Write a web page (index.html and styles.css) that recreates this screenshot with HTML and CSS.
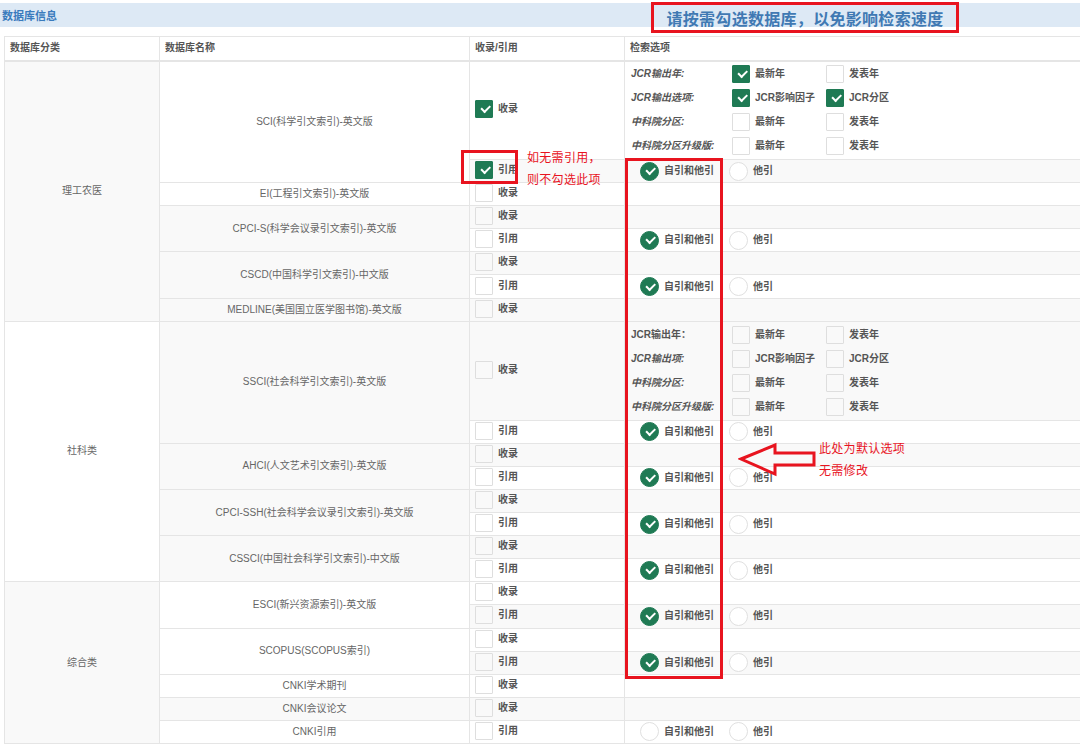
FILE: index.html
```html
<!DOCTYPE html>
<html lang="zh-CN">
<head>
<meta charset="utf-8">
<title>数据库信息</title>
<link rel="stylesheet" href="styles.css">
</head>
<body>
<div class="bar"><span class="bar-title">数据库信息</span></div>
<table class="db">
  <colgroup><col class="c1"><col class="c2"><col class="c3"><col class="c4"></colgroup>
  <thead>
    <tr><th>数据库分类</th><th>数据库名称</th><th>收录/引用</th><th>检索选项</th></tr>
  </thead>
  <tbody>
    <tr class="tall">
      <td rowspan="8" class="cat g">理工农医</td>
      <td rowspan="2" class="name">SCI(科学引文索引)-英文版</td>
      <td class="rec"><span class="ck"><span class="box on"></span>收录</span></td>
      <td class="opt">
        <div class="jcr">
          <div class="jl"><span class="jk">JCR输出年:</span><span class="jo"><span class="box on"></span>最新年</span><span class="jo"><span class="box"></span>发表年</span></div>
          <div class="jl"><span class="jk">JCR输出选项:</span><span class="jo"><span class="box on"></span>JCR影响因子</span><span class="jo"><span class="box on"></span>JCR分区</span></div>
          <div class="jl"><span class="jk">中科院分区:</span><span class="jo"><span class="box"></span>最新年</span><span class="jo"><span class="box"></span>发表年</span></div>
          <div class="jl"><span class="jk">中科院分区升级版:</span><span class="jo"><span class="box"></span>最新年</span><span class="jo"><span class="box"></span>发表年</span></div>
        </div>
      </td>
    </tr>
    <tr class="s">
      <td class="rec"><span class="ck"><span class="box on"></span>引用</span></td>
      <td class="opt"><div class="radios"><span class="rd"><span class="rad on"></span>自引和他引</span><span class="rd"><span class="rad"></span>他引</span></div></td>
    </tr>
    <tr>
      <td class="name">EI(工程引文索引)-英文版</td>
      <td class="rec"><span class="ck"><span class="box"></span>收录</span></td>
      <td class="opt"></td>
    </tr>
    <tr class="s">
      <td rowspan="2" class="name">CPCI-S(科学会议录引文索引)-英文版</td>
      <td class="rec"><span class="ck"><span class="box"></span>收录</span></td>
      <td class="opt"></td>
    </tr>
    <tr>
      <td class="rec"><span class="ck"><span class="box"></span>引用</span></td>
      <td class="opt"><div class="radios"><span class="rd"><span class="rad on"></span>自引和他引</span><span class="rd"><span class="rad"></span>他引</span></div></td>
    </tr>
    <tr class="s">
      <td rowspan="2" class="name">CSCD(中国科学引文索引)-中文版</td>
      <td class="rec"><span class="ck"><span class="box"></span>收录</span></td>
      <td class="opt"></td>
    </tr>
    <tr>
      <td class="rec"><span class="ck"><span class="box"></span>引用</span></td>
      <td class="opt"><div class="radios"><span class="rd"><span class="rad on"></span>自引和他引</span><span class="rd"><span class="rad"></span>他引</span></div></td>
    </tr>
    <tr class="s">
      <td class="name">MEDLINE(美国国立医学图书馆)-英文版</td>
      <td class="rec"><span class="ck"><span class="box"></span>收录</span></td>
      <td class="opt"></td>
    </tr>

    <tr class="s tall">
      <td rowspan="8" class="cat">社科类</td>
      <td rowspan="2" class="name">SSCI(社会科学引文索引)-英文版</td>
      <td class="rec"><span class="ck"><span class="box"></span>收录</span></td>
      <td class="opt">
        <div class="jcr">
          <div class="jl"><span class="jk up">JCR输出年：</span><span class="jo"><span class="box"></span>最新年</span><span class="jo"><span class="box"></span>发表年</span></div>
          <div class="jl"><span class="jk">JCR输出项:</span><span class="jo"><span class="box"></span>JCR影响因子</span><span class="jo"><span class="box"></span>JCR分区</span></div>
          <div class="jl"><span class="jk">中科院分区:</span><span class="jo"><span class="box"></span>最新年</span><span class="jo"><span class="box"></span>发表年</span></div>
          <div class="jl"><span class="jk">中科院分区升级版:</span><span class="jo"><span class="box"></span>最新年</span><span class="jo"><span class="box"></span>发表年</span></div>
        </div>
      </td>
    </tr>
    <tr>
      <td class="rec"><span class="ck"><span class="box"></span>引用</span></td>
      <td class="opt"><div class="radios"><span class="rd"><span class="rad on"></span>自引和他引</span><span class="rd"><span class="rad"></span>他引</span></div></td>
    </tr>
    <tr class="s">
      <td rowspan="2" class="name">AHCI(人文艺术引文索引)-英文版</td>
      <td class="rec"><span class="ck"><span class="box"></span>收录</span></td>
      <td class="opt"></td>
    </tr>
    <tr>
      <td class="rec"><span class="ck"><span class="box"></span>引用</span></td>
      <td class="opt"><div class="radios"><span class="rd"><span class="rad on"></span>自引和他引</span><span class="rd"><span class="rad"></span>他引</span></div></td>
    </tr>
    <tr class="s">
      <td rowspan="2" class="name">CPCI-SSH(社会科学会议录引文索引)-英文版</td>
      <td class="rec"><span class="ck"><span class="box"></span>收录</span></td>
      <td class="opt"></td>
    </tr>
    <tr>
      <td class="rec"><span class="ck"><span class="box"></span>引用</span></td>
      <td class="opt"><div class="radios"><span class="rd"><span class="rad on"></span>自引和他引</span><span class="rd"><span class="rad"></span>他引</span></div></td>
    </tr>
    <tr class="s">
      <td rowspan="2" class="name">CSSCI(中国社会科学引文索引)-中文版</td>
      <td class="rec"><span class="ck"><span class="box"></span>收录</span></td>
      <td class="opt"></td>
    </tr>
    <tr>
      <td class="rec"><span class="ck"><span class="box"></span>引用</span></td>
      <td class="opt"><div class="radios"><span class="rd"><span class="rad on"></span>自引和他引</span><span class="rd"><span class="rad"></span>他引</span></div></td>
    </tr>

    <tr>
      <td rowspan="7" class="cat g">综合类</td>
      <td rowspan="2" class="name">ESCI(新兴资源索引)-英文版</td>
      <td class="rec"><span class="ck"><span class="box"></span>收录</span></td>
      <td class="opt"></td>
    </tr>
    <tr class="s">
      <td class="rec"><span class="ck"><span class="box"></span>引用</span></td>
      <td class="opt"><div class="radios"><span class="rd"><span class="rad on"></span>自引和他引</span><span class="rd"><span class="rad"></span>他引</span></div></td>
    </tr>
    <tr>
      <td rowspan="2" class="name">SCOPUS(SCOPUS索引)</td>
      <td class="rec"><span class="ck"><span class="box"></span>收录</span></td>
      <td class="opt"></td>
    </tr>
    <tr class="s">
      <td class="rec"><span class="ck"><span class="box"></span>引用</span></td>
      <td class="opt"><div class="radios"><span class="rd"><span class="rad on"></span>自引和他引</span><span class="rd"><span class="rad"></span>他引</span></div></td>
    </tr>
    <tr>
      <td class="name">CNKI学术期刊</td>
      <td class="rec"><span class="ck"><span class="box"></span>收录</span></td>
      <td class="opt"></td>
    </tr>
    <tr class="s">
      <td class="name">CNKI会议论文</td>
      <td class="rec"><span class="ck"><span class="box"></span>收录</span></td>
      <td class="opt"></td>
    </tr>
    <tr>
      <td class="name">CNKI引用</td>
      <td class="rec"><span class="ck"><span class="box"></span>引用</span></td>
      <td class="opt"><div class="radios"><span class="rd"><span class="rad"></span>自引和他引</span><span class="rd"><span class="rad"></span>他引</span></div></td>
    </tr>
  </tbody>
</table>

<div class="notice">请按需勾选数据库，以免影响检索速度</div>
<div class="mark-box"></div>
<div class="note note1">如无需引用，<br>则不勾选此项</div>
<div class="col-box"></div>
<svg class="arrow" width="84" height="40" viewBox="0 0 84 40" xmlns="http://www.w3.org/2000/svg">
  <polygon points="3,19 37,5 37,13 76,13 76,25 37,25 37,34" fill="none" stroke="#e8141f" stroke-width="3" stroke-linejoin="miter"/>
</svg>
<div class="note note2">此处为默认选项<br>无需修改</div>
</body>
</html>
```

FILE: styles.css
```css
* { box-sizing: border-box; }

body {
  margin: 0;
  width: 1080px;
  height: 748px;
  overflow: hidden;
  position: relative;
  background: #fff;
  font-family: "Liberation Sans", "Noto Sans CJK SC", sans-serif;
  font-size: 10px;
  color: #666;
}

.bar {
  margin-top: 3px;
  height: 24px;
  background: #dde9f5;
  display: flex;
  align-items: center;
  padding-left: 2px;
}

.bar-title {
  font-size: 11px;
  font-weight: bold;
  color: #3a7bbd;
}

.db {
  margin: 9px 0 0 4px;
  width: 1090px;
  border-collapse: collapse;
  table-layout: fixed;
}

.c1 { width: 155px; }
.c2 { width: 310px; }
.c3 { width: 155px; }

.db th {
  height: 24px;
  padding: 0 5px;
  text-align: left;
  font-weight: bold;
  color: #555;
  border: 1px solid #e5e5e5;
  border-bottom: 2px solid #e5e5e5;
  line-height: 1;
}

.db td {
  height: 23.1px;
  padding: 0;
  border: 1px solid #e5e5e5;
  vertical-align: middle;
  line-height: 1;
}

.db tr.tall > td { height: 99px; }

.s > td { background: #f9f9f9; }

.db .cat { background: #fff; text-align: center; color: #666; }
.db .cat.g { background: #f9f9f9; }

.name { text-align: center; color: #666; }

.rec { padding-left: 5px !important; }

.ck, .jo, .rd {
  display: inline-flex;
  align-items: center;
  font-weight: bold;
  color: #555;
}

.ck { gap: 5px; }

.box {
  display: inline-block;
  position: relative;
  width: 18px;
  height: 18px;
  border: 1px solid #dedede;
  border-radius: 1px;
  flex: none;
}

.box.on, .rad.on {
  background: #1f7a54;
  border-color: #1f7a54;
}

.box.on::after, .rad.on::after {
  content: "";
  position: absolute;
  left: 4.5px;
  top: 4px;
  width: 7px;
  height: 3.5px;
  border-left: 2px solid #fff;
  border-bottom: 2px solid #fff;
  transform: rotate(-45deg);
}

.rad {
  display: inline-block;
  position: relative;
  width: 19px;
  height: 19px;
  border-radius: 50%;
  border: 1px solid #e0e0e0;
  background: #fff;
  flex: none;
}

.rad.on::after { left: 5px; top: 4.5px; }

.jcr { padding-left: 6px; }

.jl {
  display: flex;
  align-items: center;
  height: 24px;
}

.jk {
  width: 101px;
  font-style: italic;
  font-weight: bold;
  color: #555;
}

.jk.up { font-style: normal; }

.jo { width: 94px; gap: 5px; }

.radios {
  display: flex;
  align-items: center;
  padding-left: 15px;
}

.rd { gap: 5px; }
.rd + .rd { margin-left: 15px; }

.notice {
  position: absolute;
  left: 651px;
  top: 2px;
  width: 308px;
  height: 31px;
  border: 3px solid #e8141f;
  display: flex;
  align-items: center;
  justify-content: center;
  font-size: 16px;
  font-weight: bold;
  letter-spacing: 0.3px;
  color: #4079b3;
}

.mark-box {
  position: absolute;
  left: 461px;
  top: 150px;
  width: 57px;
  height: 34px;
  border: 3px solid #e8141f;
}

.col-box {
  position: absolute;
  left: 625px;
  top: 158px;
  width: 98px;
  height: 521px;
  border: 3px solid #e8141f;
}

.note {
  position: absolute;
  font-size: 12px;
  line-height: 22px;
  color: #e8141f;
  letter-spacing: 0.3px;
}

.note1 { left: 527px; top: 147px; }
.note2 { left: 819px; top: 438px; }

.arrow {
  position: absolute;
  left: 738px;
  top: 440px;
}
```
